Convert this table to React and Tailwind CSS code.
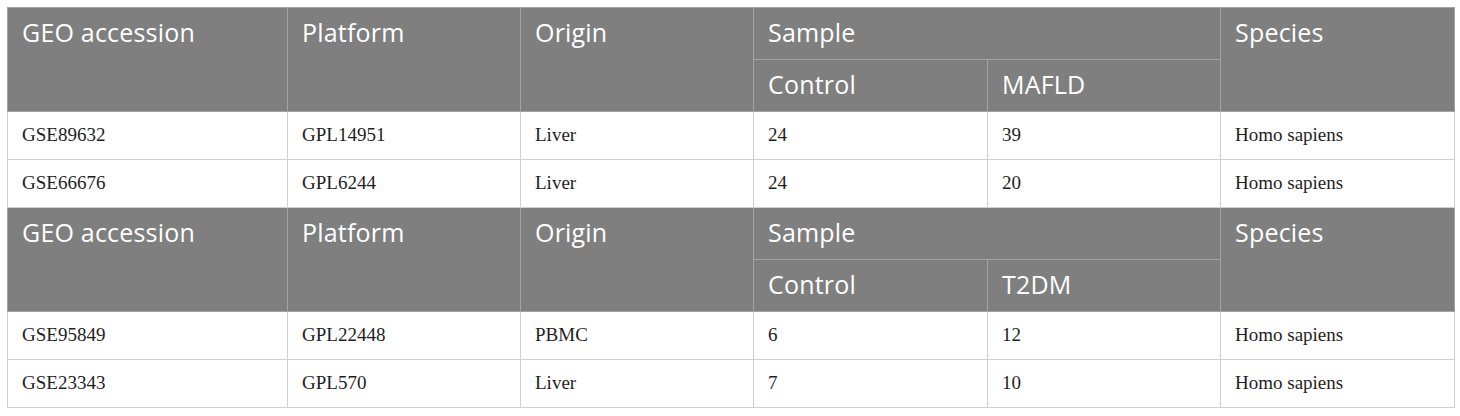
export default function App() {
  const head = "bg-[#7f7f7f] text-white font-normal text-left align-top border border-[#a3a3a3] px-[14px] tracking-[0.2px]";
  const cell = "border border-[#d0d0d0] px-[14px] align-middle text-[#1e1e1e]";

  const groups = [
    {
      label: "MAFLD",
      rows: [
        ["GSE89632", "GPL14951", "Liver", "24", "39", "Homo sapiens"],
        ["GSE66676", "GPL6244", "Liver", "24", "20", "Homo sapiens"],
      ],
    },
    {
      label: "T2DM",
      rows: [
        ["GSE95849", "GPL22448", "PBMC", "6", "12", "Homo sapiens"],
        ["GSE23343", "GPL570", "Liver", "7", "10", "Homo sapiens"],
      ],
    },
  ];

  return (
    <div className="w-[1460px] h-[416px] bg-white pt-[7px] pl-[7px]">
      <table className="table-fixed border-collapse w-[1447px] font-['Liberation_Serif',serif] text-[19px]">
        <colgroup>
          <col className="w-[280px]" />
          <col className="w-[233px]" />
          <col className="w-[233px]" />
          <col className="w-[234px]" />
          <col className="w-[233px]" />
          <col className="w-[234px]" />
        </colgroup>
        <tbody>
          {groups.map((g) => [
            <tr key={g.label + "h1"} className="h-[52px] font-['Open_Sans',sans-serif] text-[25px]">
              <th rowSpan={2} className={head + " pt-[6px]"}>GEO accession</th>
              <th rowSpan={2} className={head + " pt-[6px]"}>Platform</th>
              <th rowSpan={2} className={head + " pt-[6px]"}>Origin</th>
              <th colSpan={2} className={head + " pt-[6px]"}>Sample</th>
              <th rowSpan={2} className={head + " pt-[6px]"}>Species</th>
            </tr>,
            <tr key={g.label + "h2"} className="h-[52px] font-['Open_Sans',sans-serif] text-[25px]">
              <th className={head + " pt-[6px]"}>Control</th>
              <th className={head + " pt-[6px]"}>{g.label}</th>
            </tr>,
            ...g.rows.map((r, i) => (
              <tr key={g.label + i} className="h-[48px]">
                {r.map((c, j) => (
                  <td key={j} className={cell}>{c}</td>
                ))}
              </tr>
            )),
          ])}
        </tbody>
      </table>
    </div>
  );
}
